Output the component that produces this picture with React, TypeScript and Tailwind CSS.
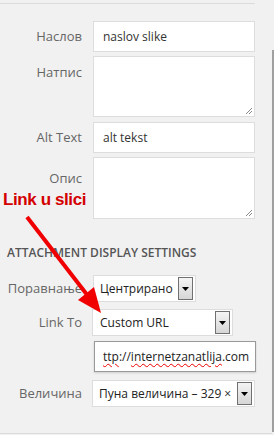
import React from 'react';

const font = { fontFamily: '"Open Sans", "Noto Sans", sans-serif' };

const DropButton = ({ h = 'h-[23px]' }: { h?: string }) => (
  <span className={`flex ${h} w-[15px] shrink-0 items-center justify-center border border-[#707070] bg-gradient-to-b from-[#f4f4f4] to-[#d6d6d6]`}>
    <svg width="7" height="4" viewBox="0 0 7 4">
      <path d="M0 0h7L3.5 4z" fill="#000" />
    </svg>
  </span>
);

const Grip = () => (
  <svg className="absolute bottom-[2px] right-[2px]" width="7" height="7" viewBox="0 0 7 7">
    <path d="M1 7L7 1M4 7L7 4" stroke="#888" strokeWidth="1" />
  </svg>
);

const Label = ({ children, top = 'items-center' }: { children: React.ReactNode; top?: string }) => (
  <div className={`flex w-[82px] shrink-0 justify-end ${top} text-[13px] text-[#666]`}>{children}</div>
);

const App: React.FC = () => {
  return (
    <div className="relative flex h-[435px] w-[274px] overflow-hidden bg-[#f1f1f1]" style={font}>
      {/* main panel */}
      <div className="flex w-[272px] flex-col">
        <div className="mt-[3px] h-px w-[255px] bg-[#dcdcdc]" />

        {/* Naslov */}
        <div className="mt-[17px] flex gap-[11px]">
          <Label>Наслов</Label>
          <div className="flex h-[31px] w-[162px] items-center border border-[#ddd] bg-white pl-[9px] text-[12px] text-[#333]">
            naslov slike
          </div>
        </div>

        {/* Natpis */}
        <div className="mt-[4px] flex gap-[11px]">
          <Label top="items-start pt-[7px]">Натпис</Label>
          <div className="relative h-[61px] w-[162px] border border-[#ddd] bg-white">
            <Grip />
          </div>
        </div>

        {/* Alt text */}
        <div className="mt-[5px] flex gap-[11px]">
          <Label>Alt Text</Label>
          <div className="flex h-[31px] w-[162px] items-center border border-[#ddd] bg-white pl-[9px] text-[12px] text-[#333]">
            alt tekst
          </div>
        </div>

        {/* Opis */}
        <div className="mt-[4px] flex gap-[11px]">
          <Label top="items-start pt-[12px]">Опис</Label>
          <div className="relative h-[62px] w-[162px] border border-[#ddd] bg-white">
            <Grip />
          </div>
        </div>

        <h3 className="mt-[26px] pl-[7px] text-[12px] leading-[16px] font-semibold uppercase text-[#555]">
          Attachment Display Settings
        </h3>

        {/* Poravnanje */}
        <div className="mt-[14px] flex gap-[11px]">
          <Label>Поравнање</Label>
          <div className="flex h-[27px] w-[103px] items-center justify-between border border-[#ddd] bg-white pl-[6px] pr-[2px] text-[12px] text-[#222]">
            <span>Центрирано</span>
            <DropButton />
          </div>
        </div>

        {/* Link To */}
        <div className="mt-[7px] flex gap-[10px]">
          <Label>Link To</Label>
          <div className="flex h-[27px] w-[141px] items-center justify-between border border-[#ddd] bg-white pl-[7px] pr-[2px] text-[12px] text-[#222]">
            <span>Custom URL</span>
            <DropButton />
          </div>
        </div>

        {/* URL */}
        <div className="mt-[5px] flex gap-[12px]">
          <div className="w-[82px] shrink-0" />
          <div className="flex h-[31px] w-[162px] items-center overflow-hidden whitespace-nowrap border border-[#999] bg-white pl-[8px] text-[12px] text-[#222] shadow-[0_1px_2px_rgba(0,0,0,0.15)]">
            <span className="underline decoration-[#e00] decoration-wavy decoration-1 underline-offset-2">ttp</span>
            <span>://</span>
            <span className="underline decoration-[#e00] decoration-wavy decoration-1 underline-offset-2">internetzanatlija</span>
            <span>.com</span>
          </div>
        </div>

        {/* Velicina */}
        <div className="mt-[8px] flex gap-[10px]">
          <Label>Величина</Label>
          <div className="flex h-[27px] w-[163px] items-center justify-between gap-[2px] border border-[#ddd] bg-white pl-[6px] pr-[2px] text-[12px] text-[#222]">
            <span className="min-w-0 overflow-hidden whitespace-nowrap">Пуна величина – 329 ×</span>
            <DropButton />
          </div>
        </div>

        <div className="mt-auto mb-[1px] h-px w-full bg-[#dcdcdc]" />
      </div>

      {/* right edge */}
      <div className="flex w-[2px] flex-col">
        <div className="mt-[50px] h-[382px] w-[2px] bg-[#a0a0a0]" />
      </div>

      {/* annotation overlay */}
      <div
        className="absolute left-[3px] top-[187px] text-[17px] font-bold tracking-[-0.4px] text-[#d40000]"
        style={{ fontFamily: '"Liberation Sans", Arial, sans-serif' }}
      >
        Link u slici
      </div>
      <svg className="pointer-events-none absolute left-0 top-0" width="274" height="435" viewBox="0 0 274 435">
        <line x1="27" y1="217" x2="88" y2="296" stroke="#f00000" strokeWidth="4" />
        <path d="M101 313 L94 287 L78 300 Z" fill="#f00000" />
      </svg>
    </div>
  );
};

export default App;
